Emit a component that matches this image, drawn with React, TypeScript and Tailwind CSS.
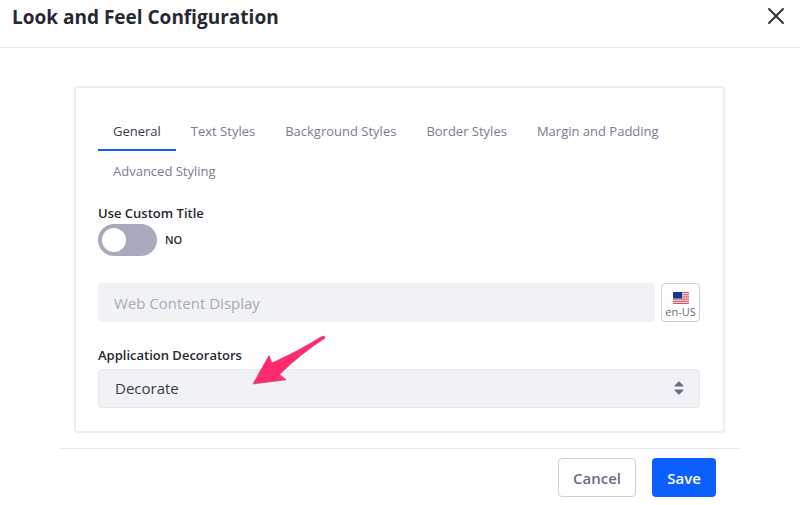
import { useState } from 'react';

const tabs = [
  'General',
  'Text Styles',
  'Background Styles',
  'Border Styles',
  'Margin and Padding',
  'Advanced Styling',
];

const stripes = [0, 2, 4, 6, 8, 10, 12];

function Flag() {
  return (
    <svg viewBox="0 0 16 13" className="h-3 w-4" preserveAspectRatio="none" aria-hidden="true">
      <rect width="16" height="13" fill="#f4f1f4" />
      {stripes.map((y) => (
        <rect key={y} y={y} width="16" height="1" fill="#d8454f" />
      ))}
      <rect width="9" height="7" fill="#0a3a9c" />
    </svg>
  );
}

function Arrow() {
  return (
    <svg
      viewBox="0 0 76 50"
      className="pointer-events-none absolute -top-[34px] left-[153px] h-[50px] w-[76px]"
      aria-hidden="true"
    >
      <path
        d="M2 49 L18 20.500 L21 28 Q45 17.500 70 2 Q74.500 0 74 3 Q50 18.500 28.500 39.500 L35 44.800 Z"
        fill="#ff2b6d"
        stroke="#d92560"
        strokeWidth="0.6"
      />
    </svg>
  );
}

export default function App() {
  const [active, setActive] = useState('General');
  const [custom, setCustom] = useState(false);

  return (
    <div className="bg-white font-['Open_Sans','Noto_Sans',sans-serif] text-[#272833]">
      <header className="flex h-12 items-start justify-between border-b border-[#e7e7ed] pr-4 pl-3">
        <h1 className="pt-[5px] text-[19px] leading-6 font-bold">
          Look and Feel Configuration
        </h1>
        <button type="button" aria-label="Close" className="mt-2 h-4 w-4">
          <svg viewBox="0 0 16 16" className="h-4 w-4" fill="none" stroke="#272833" strokeWidth="1.8" strokeLinecap="round">
            <path d="M1 1L15 15M15 1L1 15" />
          </svg>
        </button>
      </header>

      <main className="mt-[38px] mr-[75px] ml-[74px] rounded border-2 border-[#ededf2] pt-[25px] pr-[23px] pb-[23px] pl-[22px]">
        <div role="tablist" className="flex flex-wrap gap-y-0.5">
          {tabs.map((tab) => (
            <button
              key={tab}
              type="button"
              role="tab"
              aria-selected={tab === active}
              onClick={() => setActive(tab)}
              className={`h-[38px] border-b-2 px-[15px] text-[13px] leading-5 whitespace-nowrap ${
                tab === active ? 'border-[#0b5fff] text-[#393a4a]' : 'border-transparent text-[#7b7c90]'
              }`}
            >
              {tab}
            </button>
          ))}
        </div>

        <div className="mt-3">
          <label htmlFor="custom-title" className="block text-[13px] leading-5 font-semibold">
            Use Custom Title
          </label>
          <div className="mt-px flex items-center gap-2">
            <input
              id="custom-title"
              type="checkbox"
              checked={custom}
              onChange={(e) => setCustom(e.target.checked)}
              className="flex h-8 w-[59px] appearance-none items-center rounded-full bg-[#a7a9bc] px-1 before:h-6 before:w-6 before:rounded-full before:bg-white checked:justify-end checked:bg-[#0b5fff]"
            />
            <span className="text-[11px] leading-4 font-semibold">{custom ? 'YES' : 'NO'}</span>
          </div>
        </div>

        <div className="mt-[27px] flex gap-1.5">
          <input
            type="text"
            aria-label="Custom title"
            placeholder="Web Content Display"
            disabled={!custom}
            className="h-[39px] min-w-0 flex-1 rounded bg-[#f1f2f5] px-4 text-[15px] placeholder:text-[#a7a9bc]"
          />
          <button
            type="button"
            className="flex h-[39px] w-[39px] flex-col items-center justify-end rounded border border-[#cdced9] pb-px text-[11px] leading-4 whitespace-nowrap text-[#6b6c7e]"
          >
            <Flag />
            en-US
          </button>
        </div>

        <div className="mt-[23px]">
          <label htmlFor="decorators" className="block text-[13px] leading-5 font-semibold">
            Application Decorators
          </label>
          <div className="relative mt-1">
            <select
              id="decorators"
              className="block h-[39px] w-full appearance-none rounded border border-[#e7e7ed] bg-[#f1f2f5] px-4 text-[15px] text-[#393a4a]"
            >
              <option>Decorate</option>
              <option>Borderless</option>
              <option>Barebone</option>
            </select>
            <svg
              viewBox="0 0 10 14"
              className="pointer-events-none absolute top-3 right-4 h-3.5 w-2.5"
              fill="#6b6c7e"
              aria-hidden="true"
            >
              <path d="M1 5.500Q0 5.500 .7 4.500L4.300 .8Q5 .2 5.700 .8L9.300 4.500Q10 5.500 9 5.500ZM1 8.500Q0 8.500 .7 9.500L4.300 13.200Q5 13.800 5.700 13.200L9.300 9.500Q10 8.500 9 8.500Z" />
            </svg>
            <Arrow />
          </div>
        </div>
      </main>

      <footer className="mt-[15px] mr-[60px] ml-[59px] flex justify-end gap-4 border-t border-[#e7e7ed] py-[9px] pr-6 text-[15px] leading-5 font-semibold">
        <button type="button" className="h-[39px] w-[78px] rounded border border-[#cdced9] text-[#6b6c7e]">
          Cancel
        </button>
        <button type="button" className="h-[39px] w-16 rounded bg-[#0b5fff] text-white">
          Save
        </button>
      </footer>
    </div>
  );
}
